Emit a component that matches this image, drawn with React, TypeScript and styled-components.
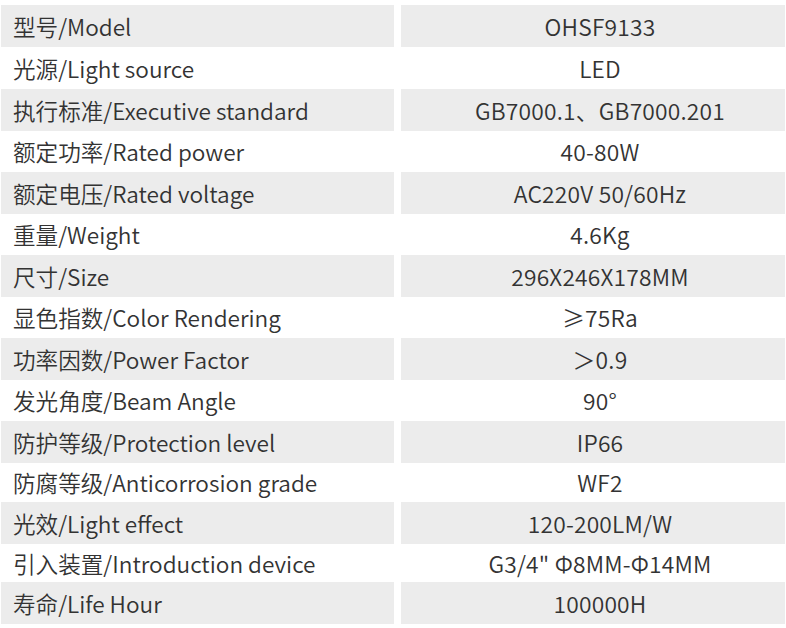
import React from "react";
import styled, { createGlobalStyle } from "styled-components";

const Global = createGlobalStyle`
  html, body { margin: 0; padding: 0; background: #ffffff; }
  body { padding: 5px 0 0 1px; overflow: hidden; }
`;

const Table = styled.div`
  display: flex;
  flex-direction: column;
  width: 784px;
  font-family: "Noto Sans CJK SC", "Noto Sans", sans-serif;
  font-weight: 350;
  color: #333333;
`;

const Row = styled.div<{ $shaded: boolean }>`
  display: grid;
  grid-template-columns: 393px 384px;
  column-gap: 7px;
  & > div {
    background: ${(p) => (p.$shaded ? "#ececec" : "transparent")};
  }
`;

const Label = styled.div`
  display: flex;
  align-items: center;
  padding-left: 12px;
  font-size: 22.6px;
  letter-spacing: 0;
  white-space: nowrap;
`;

const Value = styled.div`
  display: flex;
  align-items: center;
  justify-content: center;
  padding-left: 14px;
  font-size: 22.8px;
  letter-spacing: 0.2px;
  white-space: nowrap;
`;

const rows: [string, string, number][] = [
  ["型号/Model", "OHSF9133", 42],
  ["光源/Light source", "LED", 42],
  ["执行标准/Executive standard", "GB7000.1、GB7000.201", 42],
  ["额定功率/Rated power", "40-80W", 41],
  ["额定电压/Rated voltage", "AC220V 50/60Hz", 42],
  ["重量/Weight", "4.6Kg", 41],
  ["尺寸/Size", "296X246X178MM", 42],
  ["显色指数/Color Rendering", "≥75Ra", 41],
  ["功率因数/Power Factor", "＞0.9", 42],
  ["发光角度/Beam Angle", "90°", 41],
  ["防护等级/Protection level", "IP66", 42],
  ["防腐等级/Anticorrosion grade", "WF2", 39],
  ["光效/Light effect", "120-200LM/W", 42],
  ["引入装置/Introduction device", "G3/4\" Φ8MM-Φ14MM", 38],
  ["寿命/Life Hour", "100000H", 42],
];

export default function App() {
  return (
    <>
      <Global />
      <Table>
        {rows.map(([label, value, h], i) => (
          <Row key={label} $shaded={i % 2 === 0} style={{ height: h }}>
            <Label>{label}</Label>
            <Value>{value}</Value>
          </Row>
        ))}
      </Table>
    </>
  );
}
